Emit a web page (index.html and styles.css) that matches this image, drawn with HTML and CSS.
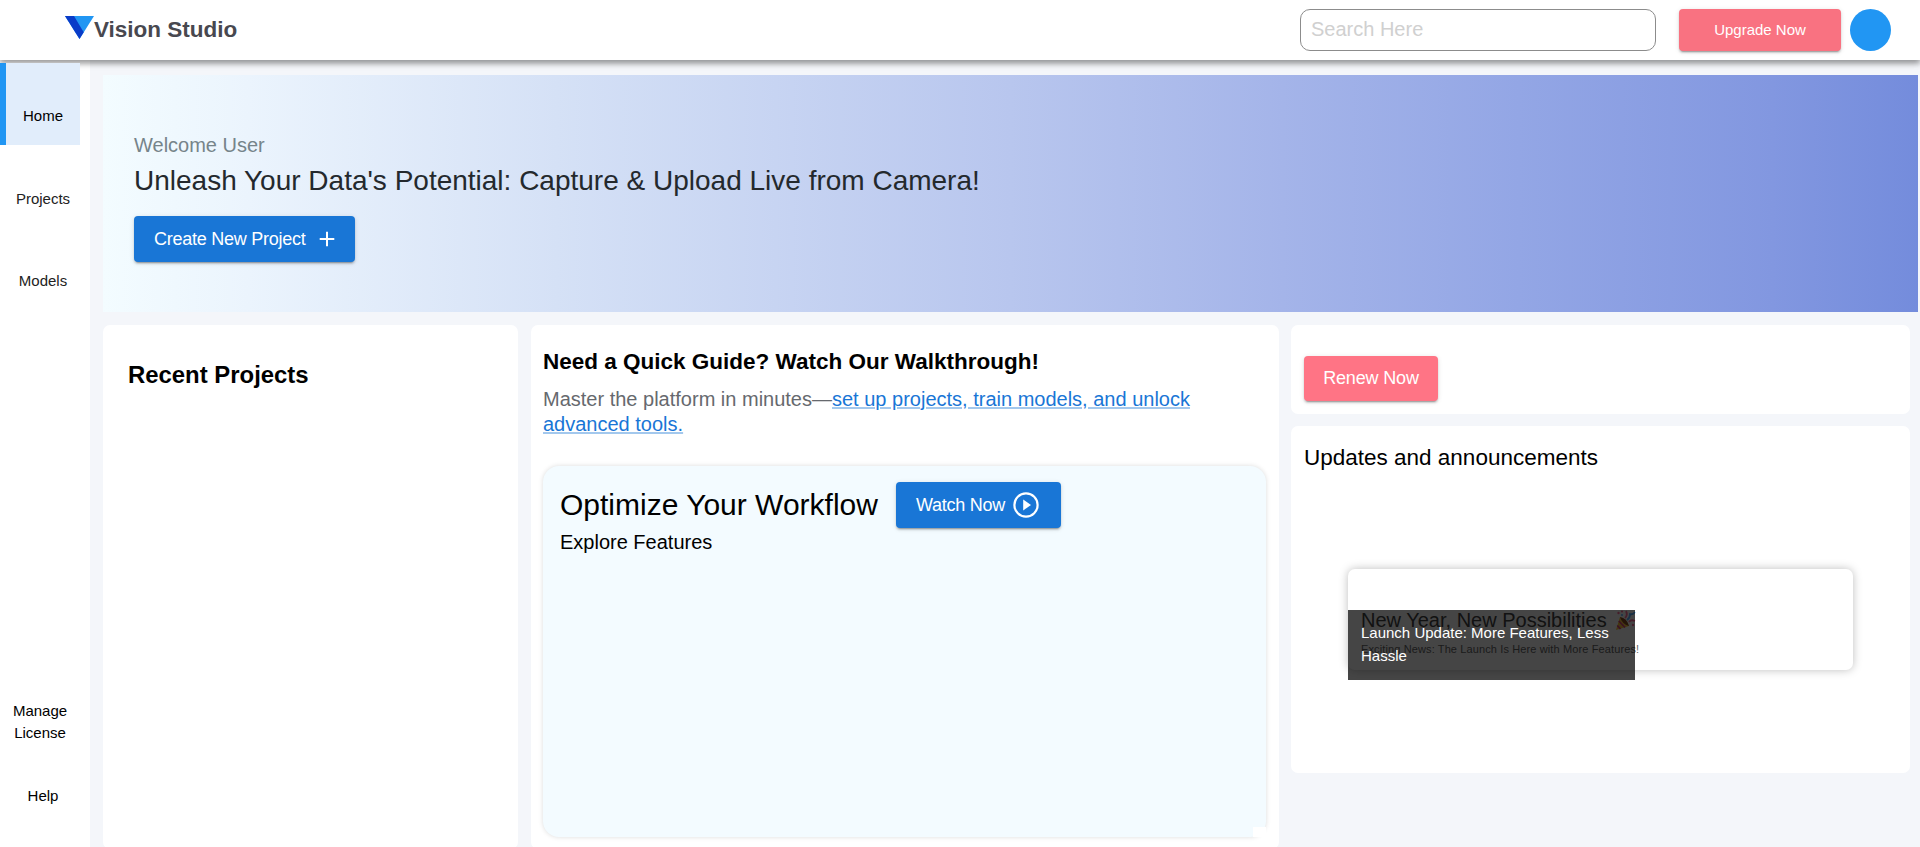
FILE: index.html
```html
<!DOCTYPE html>
<html lang="en">
<head>
<meta charset="utf-8">
<title>Vision Studio</title>
<link rel="stylesheet" href="styles.css">
</head>
<body>
<div class="app">
  <header class="header">
    <div class="brand">
      <svg class="brand-mark" width="29" height="23" viewBox="0 0 29 23"><path d="M0 0H29L14.5 23Z" fill="#2196f3"/><path d="M0 0H9L18.7 16.2L14.5 23Z" fill="#0a3cc8"/></svg>
      <span class="brand-name">Vision Studio</span>
    </div>
    <div class="header-tools">
      <input class="search" type="text" placeholder="Search Here">
      <button class="btn btn-upgrade">Upgrade Now</button>
      <div class="avatar"></div>
    </div>
  </header>
  <div class="body">
    <nav class="sidebar">
      <a class="nav-item active"><span>Home</span></a>
      <a class="nav-item"><span>Projects</span></a>
      <a class="nav-item"><span>Models</span></a>
      <a class="nav-license">Manage License</a>
      <a class="nav-help">Help</a>
    </nav>
    <main class="main">
      <section class="banner">
        <p class="welcome">Welcome User</p>
        <h1 class="headline">Unleash Your Data's Potential: Capture &amp; Upload Live from Camera!</h1>
        <button class="btn btn-create"><span>Create New Project</span>
          <svg width="24" height="24" viewBox="0 0 24 24"><path d="M12 4.7V19.3M4.7 12H19.3" stroke="#fff" stroke-width="2"/></svg>
        </button>
      </section>
      <div class="columns">
        <section class="card recent"><h2 class="title">Recent Projects</h2></section>
        <section class="card guide">
          <h2 class="title guide-title">Need a Quick Guide? Watch Our Walkthrough!</h2>
          <p class="guide-text">Master the platform in minutes—<a class="link">set up projects, train models, and unlock advanced tools.</a></p>
          <div class="workflow">
            <div class="workflow-row">
              <span class="workflow-title">Optimize Your Workflow</span>
              <button class="btn btn-watch"><span>Watch Now</span>
                <svg width="26" height="26" viewBox="0 0 26 26"><circle cx="13" cy="13" r="11.6" fill="none" stroke="#fff" stroke-width="2.2"/><path d="M10.2 7.6V18.4L18 13Z" fill="#fff"/></svg>
              </button>
            </div>
            <p class="workflow-sub">Explore Features</p>
            <div class="workflow-corner"></div>
          </div>
        </section>
        <div class="side">
          <section class="card renew"><button class="btn btn-renew">Renew Now</button></section>
          <section class="card updates">
            <h2 class="updates-title">Updates and announcements</h2>
            <div class="notice">
              <p class="notice-title">New Year, New Possibilities
                <svg class="party" width="20" height="21" viewBox="0 0 20 21"><path d="M0 20L4 7Q11 10 13 16Z" fill="#ffc83d"/><path d="M2.8 11L9 17.5M1.3 15.5L4.5 19" stroke="#d8457b" stroke-width="1.8"/><path d="M4 7Q11 8 13 16Q6 14 4 7Z" fill="#8a4a1f"/><path d="M9 8Q12 5 10 1M13 12Q15 9 19 11" fill="none" stroke="#ff6f9c" stroke-width="1.8"/><path d="M11 10Q14 8 14 4Q17 5 19 2" fill="none" stroke="#5db0ff" stroke-width="1.8"/><circle cx="2.5" cy="3" r="1.2" fill="#ff6f9c"/><circle cx="6" cy="1.5" r="1.1" fill="#ff6f9c"/><circle cx="6" cy="5" r="1" fill="#5db0ff"/><circle cx="17" cy="15" r="1.2" fill="#ff6f9c"/></svg>
              </p>
              <p class="notice-text">Exciting News: The Launch Is Here with More Features!</p>
              <div class="tooltip">Launch Update: More Features, Less Hassle</div>
            </div>
          </section>
        </div>
      </div>
    </main>
  </div>
</div>
</body>
</html>
```
FILE: styles.css
```css
* { box-sizing: border-box; margin: 0; }
body { font-family: "Liberation Sans", Arial, sans-serif; background: #f4f6fa; color: #000; }
.app { height: 847px; overflow: hidden; display: flex; flex-direction: column; }
.header { position: relative; z-index: 1; flex: none; height: 60px; background: #fff; display: flex; justify-content: space-between; padding: 9px 29px 9px 65px; box-shadow: 0 3px 5px rgba(0,0,0,.22), 0 4px 6px rgba(0,0,0,.16), 0 1px 10px rgba(0,0,0,.12); }
.brand { display: flex; align-items: flex-start; }
.brand-mark { margin-top: 7px; }
.brand-name { font-size: 22.5px; font-weight: 700; line-height: 40px; padding-top: 1px; color: #48484f; }
.header-tools { display: flex; }
.search { width: 356px; height: 42px; margin-right: 23px; padding: 0 10px 1px; border: 1px solid #8c8c8c; border-radius: 10px; font: 20px "Liberation Sans", Arial, sans-serif; background: #fff; }
.search::placeholder { color: #d0d0d0; }
.btn { border: 0; border-radius: 4px; color: #fff; font-family: "Liberation Sans", Arial, sans-serif; display: flex; align-items: center; padding: 0; letter-spacing: -.25px; box-shadow: 0 3px 1px -2px rgba(0,0,0,.2), 0 2px 2px rgba(0,0,0,.14), 0 1px 5px rgba(0,0,0,.12); }
.btn-upgrade { width: 162px; height: 42px; margin-right: 9px; padding-bottom: 2px; justify-content: center; background: #f97281; font-size: 15px; letter-spacing: 0; }
.avatar { width: 41px; height: 42px; border-radius: 50%; background: #2196f3; }
.body { flex: 1; min-height: 0; display: flex; }
.sidebar { flex: none; width: 90px; background: #fff; padding-top: 3px; display: flex; flex-direction: column; font-size: 15px; }
.nav-item { position: relative; z-index: 2; width: 80px; height: 82px; margin-bottom: .5px; padding: 44px 0 0 6px; text-align: center; line-height: 18px; color: #222; }
.nav-item.active { background: #e1edfb; border-left: 6px solid #2196f3; padding-left: 0; color: #000; }
.nav-license { width: 80px; margin-top: 389px; padding: 0 10px; text-align: center; line-height: 22px; }
.nav-help { width: 86px; margin-top: 43px; text-align: center; line-height: 18px; }
.main { flex: 1; padding: 15px 2px 0 13px; }
.banner { height: 237px; padding: 58px 31px 0; background: linear-gradient(to right, #f3fcff 0%, #ebf4fd 8%, #d5e1f6 25%, #b8c6ee 50%, #a4b4e9 65%, #93a6e5 78%, #8297e0 92%, #748cdc 100%); }
.welcome { font-size: 20px; line-height: 24px; color: #76848a; }
.headline { font-size: 28px; font-weight: 400; line-height: 34px; margin-top: 7px; color: #24292d; white-space: nowrap; }
.btn-create { width: 221px; height: 46px; margin-top: 18px; padding: 0 16px 0 20px; background: #1976d6; font-size: 18px; justify-content: space-between; }
.columns { display: flex; margin-top: 13px; height: 524px; }
.card { background: #fff; border-radius: 7px; }
.title { font-size: 23.9px; font-weight: 700; line-height: 28px; white-space: nowrap; }
.guide-title { font-size: 22.5px; }
.recent { width: 415px; padding: 36px 25px; }
.guide { width: 748px; margin: 0 12px 0 13px; padding: 23px 12px 0; }
.guide-text { margin-top: 11px; font-size: 20px; line-height: 25px; color: #66696e; }
.link { color: #1976d6; text-decoration: underline; text-decoration-color: rgba(25,118,210,.4); }
.workflow { position: relative; height: 371px; margin-top: 29px; width: 723px; padding: 16px 17px; border-radius: 16px; background: #f3fbff; box-shadow: 0 0 5px rgba(0,0,0,.14); }
.workflow-row { display: flex; align-items: center; }
.workflow-title { font-size: 30px; line-height: 46px; width: 336px; white-space: nowrap; }
.btn-watch { width: 165px; height: 46px; padding: 0 22px 0 20px; background: #1976d6; font-size: 18px; justify-content: space-between; }
.workflow-sub { margin-top: 2px; font-size: 20px; line-height: 24px; }
.workflow-corner { position: absolute; right: 0; bottom: 0; width: 13px; height: 10px; background: #fff; }
.side { width: 619px; }
.renew { height: 89px; padding: 31px 13px; }
.btn-renew { width: 134px; height: 45px; justify-content: center; background: #ff7485; font-size: 18px; letter-spacing: -.15px; }
.updates { height: 347px; margin-top: 12px; padding: 18px 13px; }
.updates-title { font-size: 22.5px; font-weight: 400; line-height: 28px; }
.notice { position: relative; width: 505px; height: 101px; margin: 97px 0 0 44px; padding: 39px 13px; border-radius: 7px; box-shadow: 0 0 10px rgba(0,0,0,.26); }
.notice-title { display: flex; align-items: center; gap: 9px; font-size: 20px; line-height: 24px; color: #444; white-space: nowrap; }
.notice-text { margin-top: 11px; font-size: 11px; line-height: 12px; color: #666; letter-spacing: .12px; white-space: nowrap; }
.tooltip { position: absolute; left: 0; top: 41px; width: 287px; height: 70px; padding: 11px 13px; background: rgba(0,0,0,.73); color: #fff; font-size: 15px; line-height: 23px; }
```
